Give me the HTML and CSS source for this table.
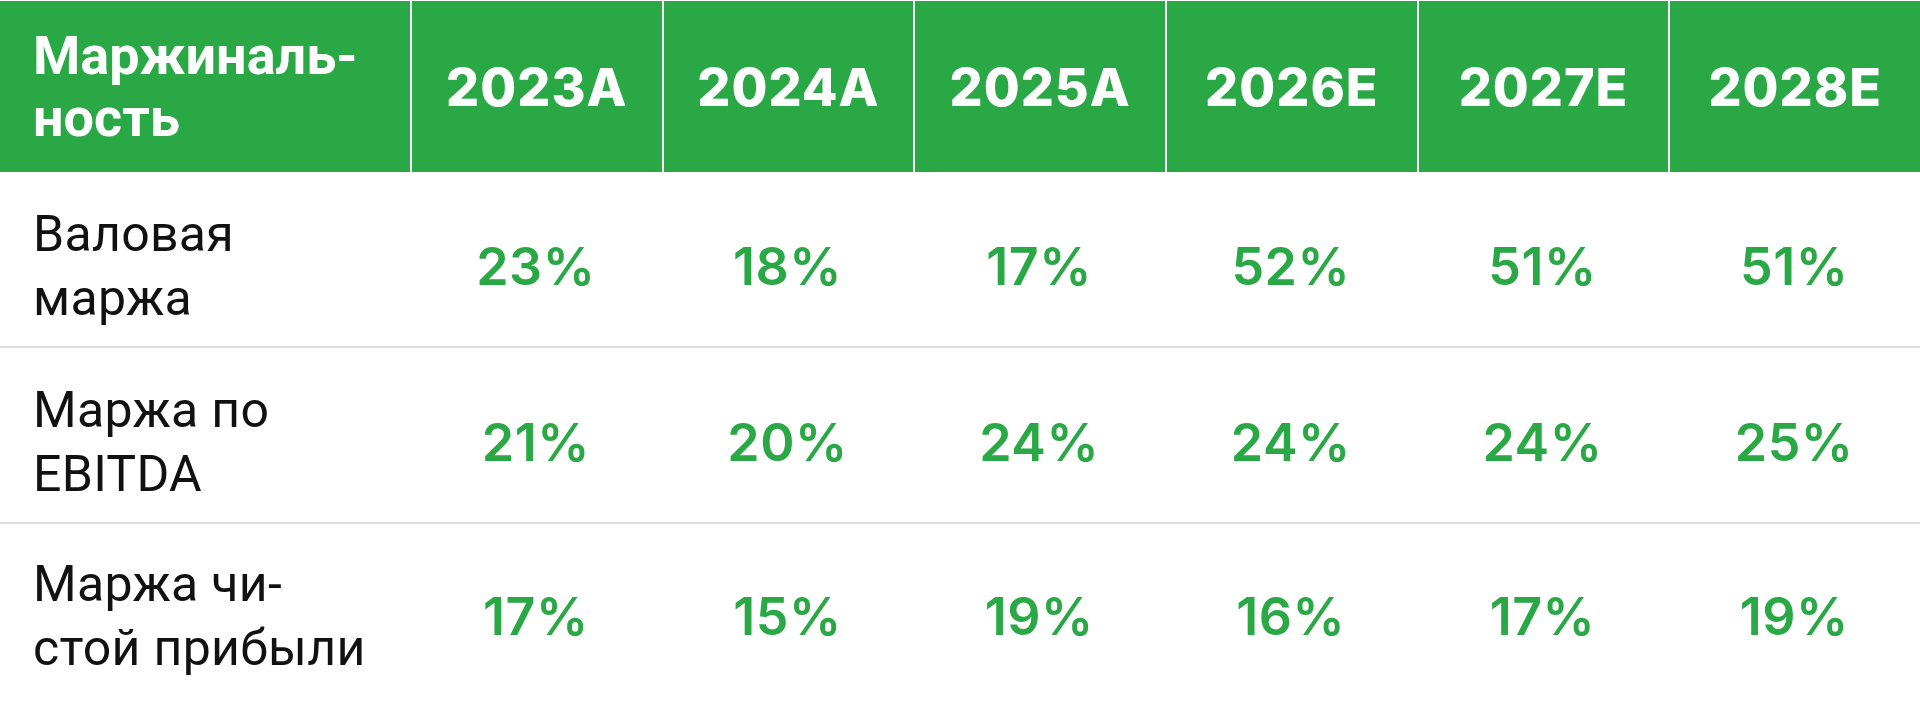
FILE: index.html
```html
<!DOCTYPE html>
<html lang="ru">
<head>
<meta charset="utf-8">
<title>Маржинальность</title>
<link rel="stylesheet" href="styles.css">
</head>
<body>
<div class="table">
  <div class="row head">
    <div class="cell label-head">Маржиналь-<br>ность</div>
    <div class="cell year">2023A</div>
    <div class="cell year">2024A</div>
    <div class="cell year">2025A</div>
    <div class="cell year">2026E</div>
    <div class="cell year">2027E</div>
    <div class="cell year">2028E</div>
  </div>
  <div class="row body r1">
    <div class="cell label">Валовая<br>маржа</div>
    <div class="cell val">23%</div>
    <div class="cell val">18%</div>
    <div class="cell val">17%</div>
    <div class="cell val">52%</div>
    <div class="cell val">51%</div>
    <div class="cell val">51%</div>
  </div>
  <div class="row body r2">
    <div class="cell label">Маржа по<br>EBITDA</div>
    <div class="cell val">21%</div>
    <div class="cell val">20%</div>
    <div class="cell val">24%</div>
    <div class="cell val">24%</div>
    <div class="cell val">24%</div>
    <div class="cell val">25%</div>
  </div>
  <div class="row body r3">
    <div class="cell label">Маржа чи-<br>стой прибыли</div>
    <div class="cell val">17%</div>
    <div class="cell val">15%</div>
    <div class="cell val">19%</div>
    <div class="cell val">16%</div>
    <div class="cell val">17%</div>
    <div class="cell val">19%</div>
  </div>
</div>
</body>
</html>
```

FILE: styles.css
```css
* { box-sizing: border-box; }
html, body { margin: 0; padding: 0; background: #ffffff; }
body { padding-top: 1px; }

.table { width: 1920px; }

.row {
  display: grid;
  grid-template-columns: 410px repeat(6, 1fr);
}

.cell {
  display: flex;
  align-items: center;
}

.head {
  height: 171px;
  background: #29a845;
}

.label-head {
  padding-left: 33px;
  font-family: Roboto, "Liberation Sans", sans-serif;
  font-weight: 700;
  font-size: 54px;
  line-height: 62px;
  color: #ffffff;
}

.year {
  justify-content: center;
  border-left: 2px solid #ffffff;
  font-family: Inter, "Liberation Sans", sans-serif;
  font-weight: 800;
  font-size: 52px;
  letter-spacing: 1px;
  color: #ffffff;
  padding-top: 2px;
}

.body {
  height: 176px;
  border-bottom: 2px solid #dcdcdc;
  padding-top: 14px;
}

.r3 { border-bottom: none; padding-top: 8px; }

.label {
  padding-left: 33px;
  font-family: Roboto, "Liberation Sans", sans-serif;
  font-weight: 400;
  font-size: 50px;
  line-height: 64px;
  letter-spacing: 0.3px;
  color: #111111;
}

.val {
  justify-content: center;
  font-family: Inter, "Liberation Sans", sans-serif;
  font-weight: 600;
  font-size: 52px;
  letter-spacing: 0.5px;
  color: #2aa846;
}
```
